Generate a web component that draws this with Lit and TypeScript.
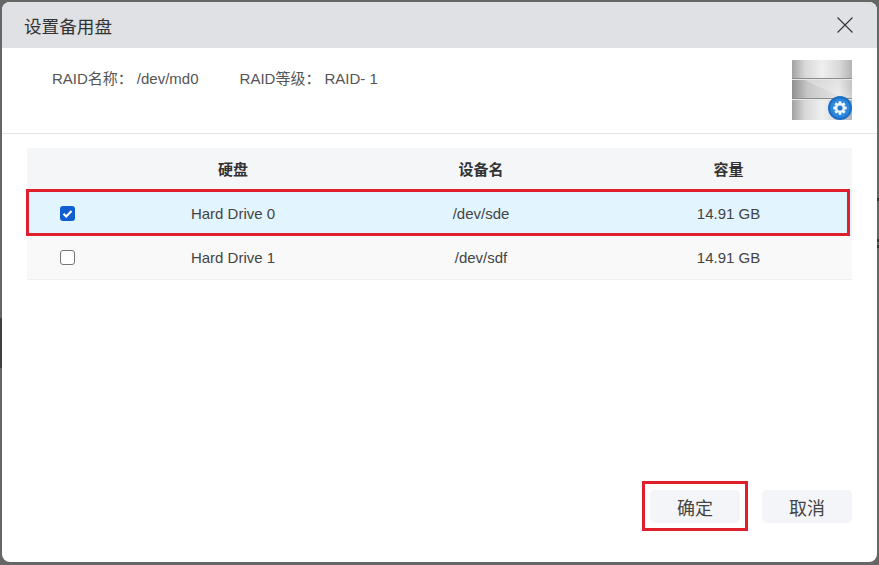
import { LitElement, html, css, svg } from "lit";
import { customElement } from "lit/decorators.js";

const rows = [
  { name: "Hard Drive 0", dev: "/dev/sde", size: "14.91 GB", on: true },
  { name: "Hard Drive 1", dev: "/dev/sdf", size: "14.91 GB", on: false },
];

const gear = svg`<svg class="gear" viewBox="0 0 24 24"><circle cx="12" cy="12" r="12" fill="#1c6fc4"/><circle cx="12" cy="12" r="9.800" fill="#2b86dc"/><g stroke="#eef6fd" stroke-width="2.800"><path d="M12 5.300v13.400M5.300 12h13.400M7.300 7.300l9.400 9.400M16.700 7.300l-9.400 9.400"/></g><circle cx="12" cy="12" r="5" fill="#eef6fd"/><circle cx="12" cy="12" r="2.600" fill="#2677c8"/></svg>`;

@customElement("app-root")
export class AppRoot extends LitElement {
  static styles = css`
    :host {
      display: block;
      width: 879px;
      height: 565px;
      box-sizing: border-box;
      padding: 2px 2px 3px;
      background:
        linear-gradient(#3f3f3f, #3f3f3f) 0 318px / 2px 50px no-repeat,
        linear-gradient(#333, #333) 877px 198px / 2px 3px no-repeat,
        linear-gradient(#333, #333) 877px 239px / 2px 3px no-repeat,
        linear-gradient(#333, #333) 877px 245px / 2px 3px no-repeat,
        #666;
      font-family: "Liberation Sans", "Noto Sans CJK SC", sans-serif;
      color: #333;
    }
    .dialog {
      position: relative;
      height: 560px;
      background: #fff;
      border-radius: 8px;
      overflow: hidden;
      display: flex;
      flex-direction: column;
    }
    .head {
      height: 46px;
      flex: none;
      background: #dfe1e5;
      display: flex;
      align-items: center;
      justify-content: space-between;
      padding: 0 24px 0 22px;
      font-size: 17.6px;
      color: #333;
    }
    .close { width: 16px; height: 16px; display: block; }
    .info {
      height: 86px;
      flex: none;
      box-sizing: border-box;
      border-bottom: 1px solid #e3e4e6;
      display: flex;
      justify-content: space-between;
      padding: 12px 25px 0 50px;
      font-size: 15px;
      color: #555;
    }
    .pairs { display: flex; gap: 41px; line-height: 37px; height: 37px; }
    .pairs span span { margin-left: 4px; }
    .disk {
      position: relative;
      width: 60px;
      height: 60px;
      display: flex;
      flex-direction: column;
    }
    .disk i {
      display: block;
      box-sizing: border-box;
      height: 20px;
      border-bottom: 1px solid #e8e8e8;
      box-shadow: inset 0 -1px 0 #8c8c8c;
      background: linear-gradient(90deg, #a2a2a2 0%, #d8d8d8 22%, #efefef 50%, #dadada 78%, #b4b4b4 100%);
    }
    .disk i.mid {
      background:
        linear-gradient(25deg, transparent 52%, rgba(255, 255, 255, 0.28) 54%, transparent 85%),
        linear-gradient(90deg, #8f8f8f 0%, #c6c6c6 25%, #d6d6d6 50%, #e4e4e4 78%, #c4c4c4 100%);
    }
    .disk i.end { border-bottom: 0; box-shadow: none; }
    .gear { position: absolute; right: 0; bottom: 0; width: 24px; height: 24px; }
    .table { margin: 14px 25px 0; }
    .row {
      display: grid;
      grid-template-columns: 82px 248px 248px 247px;
      align-items: center;
      text-align: center;
      font-size: 15px;
      color: #444;
      height: 44px;
      background: #f9f9fa;
      border-bottom: 1px solid #eeeff0;
      box-sizing: border-box;
    }
    .row.th { height: 42px; padding-bottom: 2px; background: #f5f6f7; border-bottom: 0; font-weight: bold; color: #333; }
    .row.sel { height: 46px; background: #e2f4fe; border-bottom: 0; }
    .box {
      width: 15px;
      height: 15px;
      box-sizing: border-box;
      margin-left: 33px;
      border: 1.5px solid #767676;
      border-radius: 3px;
      background: #fff;
    }
    .box.on { background: #0f5fd0; border: 0; display: flex; }
    .box svg { width: 15px; height: 15px; display: block; }
    .foot {
      margin-top: auto;
      display: flex;
      justify-content: flex-end;
      gap: 22px;
      padding: 0 25px 39px 0;
    }
    .btn {
      width: 90px;
      height: 33px;
      border-radius: 5px;
      background: #f3f5f8;
      display: flex;
      align-items: center;
      justify-content: center;
      font-size: 18px;
      color: #444;
    }
    .mark { position: absolute; border: 3px solid #e01f2d; box-sizing: border-box; pointer-events: none; }
    .mark.a { left: 24px; top: 187px; width: 824px; height: 47px; }
    .mark.b { left: 640px; top: 479px; width: 106px; height: 50px; }
  `;

  render() {
    return html`<div class="dialog">
      <div class="head">
        <span>设置备用盘</span>
        <svg class="close" viewBox="0 0 16 16"><path d="M.5.5l15 15M15.500.5l-15 15" stroke="#333" stroke-width="1.100" fill="none"/></svg>
      </div>
      <div class="info">
        <div class="pairs">
          <span>RAID名称：<span>/dev/md0</span></span>
          <span>RAID等级：<span>RAID- 1</span></span>
        </div>
        <div class="disk"><i></i><i class="mid"></i><i class="end"></i>${gear}</div>
      </div>
      <div class="table">
        <div class="row th"><span></span><span>硬盘</span><span>设备名</span><span>容量</span></div>
        ${rows.map(
          (r) => html`<div class="row ${r.on ? "sel" : ""}">
            <div class="box ${r.on ? "on" : ""}">${r.on
              ? html`<svg viewBox="0 0 15 15"><path d="M3.500 7.800l2.700 2.700 5.300-5.600" stroke="#fff" stroke-width="2.200" fill="none"/></svg>`
              : ""}</div>
            <span>${r.name}</span><span>${r.dev}</span><span>${r.size}</span>
          </div>`
        )}
      </div>
      <div class="foot">
        <div class="btn">确定</div>
        <div class="btn">取消</div>
      </div>
      <div class="mark a"></div>
      <div class="mark b"></div>
    </div>`;
  }
}
